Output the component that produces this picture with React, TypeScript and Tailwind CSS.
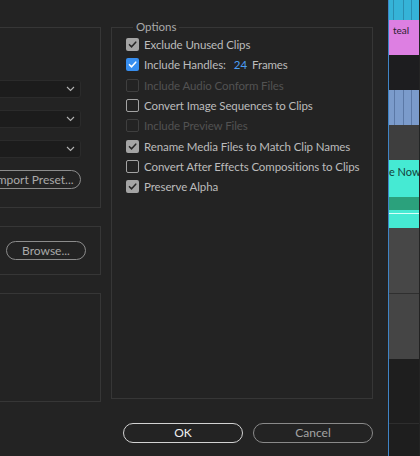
import React from "react";

type Opt = {
  label: string;
  state: "on" | "off" | "blue";
  disabled?: boolean;
  extra?: boolean;
};

const options: Opt[] = [
  { label: "Exclude Unused Clips", state: "on" },
  { label: "Include Handles:", state: "blue", extra: true },
  { label: "Include Audio Conform Files", state: "off", disabled: true },
  { label: "Convert Image Sequences to Clips", state: "off" },
  { label: "Include Preview Files", state: "off", disabled: true },
  { label: "Rename Media Files to Match Clip Names", state: "on" },
  { label: "Convert After Effects Compositions to Clips", state: "off" },
  { label: "Preserve Alpha", state: "on" },
];

function Check({ state, disabled }: { state: Opt["state"]; disabled?: boolean }) {
  if (state === "off") {
    return (
      <span
        className={
          "h-[13px] w-[13px] shrink-0 rounded-[2px] border-[1.5px] " +
          (disabled ? "border-[#3f3f3f]" : "border-[#a3a3a3]")
        }
      />
    );
  }
  const blue = state === "blue";
  return (
    <span
      className={
        "flex h-[13px] w-[13px] shrink-0 items-center justify-center rounded-[2px] " +
        (blue ? "bg-[#378ef0]" : "bg-[#a4a4a4]")
      }
    >
      <svg width="9" height="9" viewBox="0 0 10 10">
        <polyline
          points="1.6,5.2 4,7.6 8.6,2.4"
          fill="none"
          stroke={blue ? "#ffffff" : "#262626"}
          strokeWidth="1.7"
          strokeLinecap="round"
          strokeLinejoin="round"
        />
      </svg>
    </span>
  );
}

function Dropdown() {
  return (
    <div className="flex h-[18px] w-[170px] items-center justify-end rounded-[3px] border border-[#2b2b2b] bg-[#1c1c1c] pr-[5px]">
      <svg width="9" height="6" viewBox="0 0 9 6">
        <polyline points="1,1 4.5,4.5 8,1" fill="none" stroke="#b4b4b4" strokeWidth="1.1" />
      </svg>
    </div>
  );
}

function Timeline() {
  return (
    <div className="flex w-[31px] flex-col border-l border-[#3f84c6]">
      <div className="flex h-[20px] bg-[#35b3d8]">
        <div className="w-[5px] border-r border-[#2a8db0]" />
        <div className="w-[10px] border-r border-[#2a8db0]" />
        <div className="w-[8px] border-r border-[#2a8db0]" />
      </div>
      <div className="h-[35px] bg-[#dd7fe2] pl-[4px] pt-[4px] text-[10px] leading-[12px] text-[#2a2130]">
        teal
      </div>
      <div className="h-[35px] bg-[#1d1d1f]" />
      <div className="flex h-[35px] bg-[#7b9bcb]">
        <div className="w-[6px] border-r border-[#5b78a6]" />
        <div className="w-[9px] border-r border-[#5b78a6]" />
        <div className="w-[8px] border-r border-[#5b78a6]" />
      </div>
      <div className="h-[35px] bg-[#3e3e3e]" />
      <div className="flex h-[68px] flex-col bg-[#45ead3]">
        <div className="h-[6px]" />
        <div className="h-[12px] overflow-hidden whitespace-nowrap text-[11px] leading-[12px] text-[#15403a]">
          e Now.wav
        </div>
        <div className="h-[19px]" />
        <div className="h-[13px] bg-[#2ba17c]" />
        <div className="h-[3px]" />
        <div className="h-[1px] bg-[#d7fff8]" />
        <div className="h-[14px]" />
      </div>
      <div className="h-[66px] border-b border-[#2f2f2f] bg-[#474747]" />
      <div className="h-[65px] bg-[#454545]" />
      <div className="h-[65px] border-b border-[#2e2e2e] bg-[#1e1e1e]" />
      <div className="flex-1 bg-[#1e1e1e]" />
    </div>
  );
}

export default function App() {
  return (
    <div
      className="flex h-[456px] w-[420px] overflow-hidden bg-[#232323] text-[#bcbcbc]"
      style={{ fontFamily: "Lato, 'Noto Sans', sans-serif" }}
    >
      {/* dialog */}
      <div className="flex w-[388px] shrink-0 flex-col pr-[15px]">
        <div className="flex gap-[10px]">
          {/* left column, partly off screen */}
          <div className="-ml-[120px] flex w-[221px] shrink-0 flex-col gap-[18px] pt-[27px]">
            <div className="flex h-[181px] flex-col items-end justify-end gap-[12px] border border-[#363636] pb-[18px] pr-[19px]">
              <Dropdown />
              <Dropdown />
              <Dropdown />
              <button className="h-[19px] w-[95px] rounded-full border border-[#8c8c8c] text-[12px] leading-none text-[#a9a9a9]">
                Import Preset...
              </button>
            </div>
            <div className="flex h-[49px] items-center justify-end border border-[#363636] pr-[14px]">
              <button className="h-[19px] w-[80px] rounded-full border border-[#8c8c8c] text-[12px] leading-none text-[#a9a9a9]">
                Browse...
              </button>
            </div>
            <div className="h-[109px] border border-[#363636]" />
          </div>

          {/* options */}
          <fieldset className="mt-[20px] h-[379px] flex-1 border border-[#363636] pl-[14px]">
            <legend className="ml-[7px] px-[3px] text-[11.5px] leading-[14px] text-[#a9a9a9]">
              Options
            </legend>
            <div className="flex flex-col pt-[0.5px]">
              {options.map((o) => (
                <div key={o.label} className="flex h-[20.3px] items-center gap-[5px] text-[11.5px] tracking-[-0.1px]">
                  <Check state={o.state} disabled={o.disabled} />
                  <span className={o.disabled ? "text-[#525252]" : "text-[#bcbcbc]"}>
                    {o.label}
                  </span>
                  {o.extra && (
                    <>
                      <span className="ml-[3px] text-[#4b9df2]">24</span>
                      <span>Frames</span>
                    </>
                  )}
                </div>
              ))}
            </div>
          </fieldset>
        </div>

        <div className="mt-[21px] flex justify-end gap-[10px]">
          <button className="h-[20px] w-[120px] rounded-full border border-[#d2d2d2] text-[12px] leading-none text-[#f0f0f0]">
            OK
          </button>
          <button className="h-[20px] w-[120px] rounded-full border border-[#8a8a8a] text-[12px] leading-none text-[#a3a3a3]">
            Cancel
          </button>
        </div>
      </div>
      <Timeline />
    </div>
  );
}
